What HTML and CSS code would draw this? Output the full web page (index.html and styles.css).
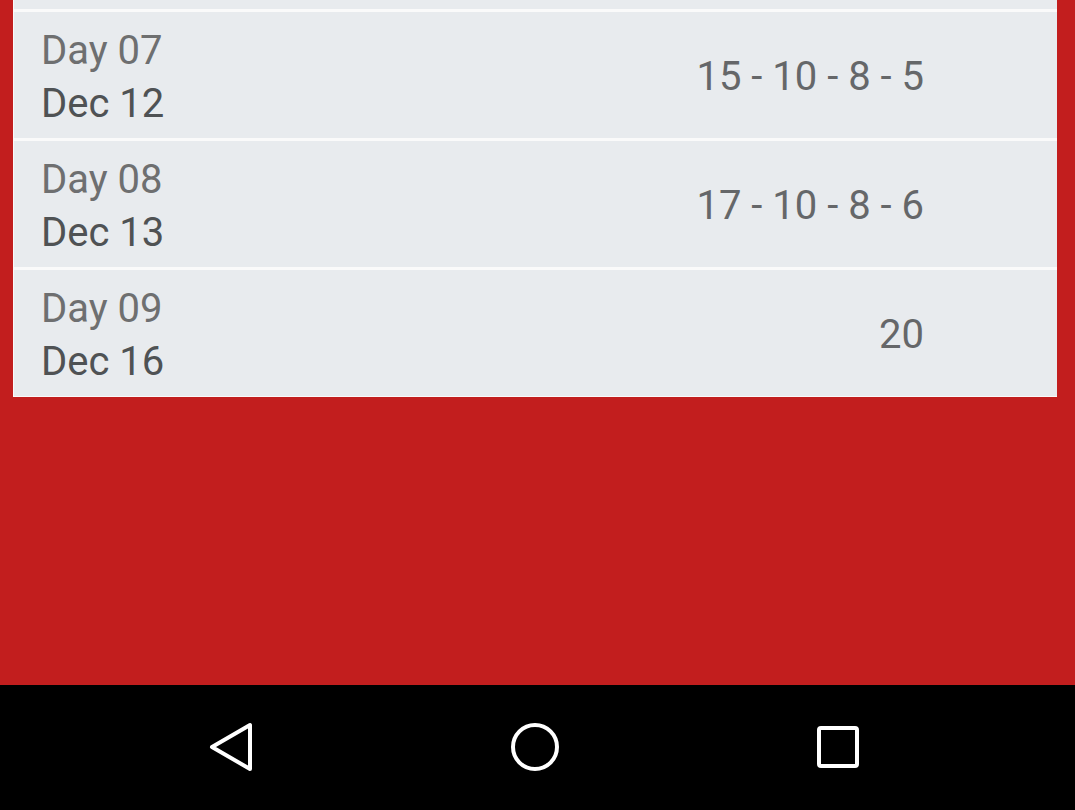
FILE: index.html
```html
<!DOCTYPE html>
<html>
<head>
<meta charset="utf-8">
<link rel="stylesheet" href="styles.css">
</head>
<body>
<div class="screen">
  <main class="content">
    <div class="card">
      <div class="row partial"></div>
      <div class="row">
        <div class="date"><div class="day">Day 07</div><div class="dec">Dec 12</div></div>
        <div class="value">15 - 10 - 8 - 5</div>
      </div>
      <div class="row">
        <div class="date"><div class="day">Day 08</div><div class="dec">Dec 13</div></div>
        <div class="value">17 - 10 - 8 - 6</div>
      </div>
      <div class="row">
        <div class="date"><div class="day">Day 09</div><div class="dec">Dec 16</div></div>
        <div class="value">20</div>
      </div>
    </div>
  </main>
  <nav class="navbar">
    <svg class="nav-icon" width="50" height="50" viewBox="0 0 50 50"><path d="M6 25 L44 3 L44 47 Z" fill="none" stroke="#fff" stroke-width="4" stroke-linejoin="round"/></svg>
    <svg class="nav-icon" width="50" height="50" viewBox="0 0 50 50"><circle cx="25" cy="25" r="22" fill="none" stroke="#fff" stroke-width="4"/></svg>
    <svg class="nav-icon" width="50" height="50" viewBox="0 0 50 50"><rect x="6" y="6" width="38" height="38" rx="2" fill="none" stroke="#fff" stroke-width="4"/></svg>
  </nav>
</div>
</body>
</html>
```
FILE: styles.css
```css
html, body {
  margin: 0;
  padding: 0;
}
body {
  background: #c21e1e;
  font-family: Roboto, "Liberation Sans", sans-serif;
}
.screen {
  width: 1075px;
  height: 810px;
  display: flex;
  flex-direction: column;
  overflow: hidden;
}
.content {
  flex: 1;
  background: #c21e1e;
  padding: 0 18px 0 13px;
}
.card {
  background: #fafafa;
  display: flex;
  flex-direction: column;
  gap: 3px;
  padding: 0 0 1px 1px;
}
.row {
  background: #e8ebee;
  height: 126px;
  box-sizing: border-box;
  display: flex;
  justify-content: space-between;
  align-items: flex-start;
  padding: 12px 133px 0 27px;
  font-size: 40px;
  line-height: 53px;
}
.row.partial {
  height: 9px;
  padding: 0;
}
.day {
  color: #6e6f70;
}
.dec {
  color: #4f5254;
}
.value {
  color: #656769;
  margin-top: 26px;
}
.navbar {
  height: 125px;
  background: #000;
  display: flex;
  align-items: center;
  padding: 0 212px 0 206px;
  justify-content: space-between;
  padding-bottom: 1px;
  box-sizing: border-box;
}
.nav-icon {
  display: block;
}
```
